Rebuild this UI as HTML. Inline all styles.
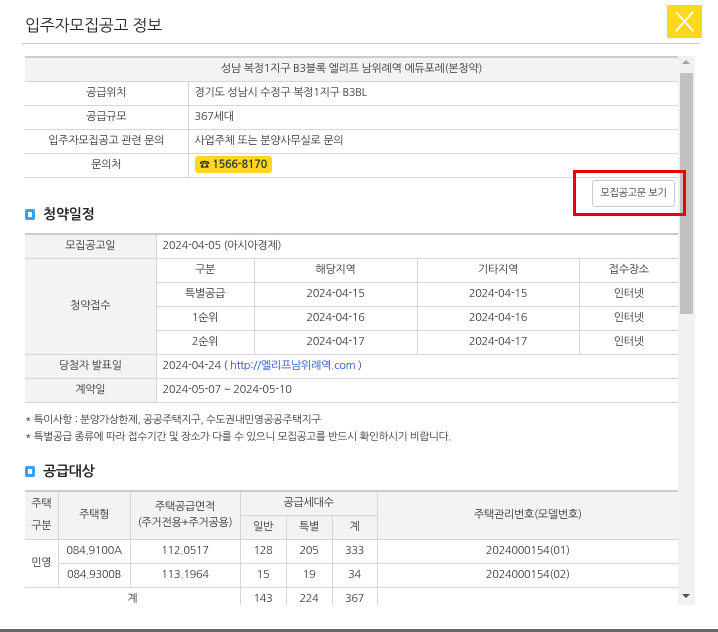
<!DOCTYPE html>
<html><head><meta charset="utf-8"><style>
*{margin:0;padding:0;box-sizing:border-box}
html,body{width:718px;height:632px;overflow:hidden}
body{background:#fff;position:relative;font-family:"NanumGothic","Noto Sans CJK KR",sans-serif;color:#333;font-size:11px;letter-spacing:-0.3px}
.abs{position:absolute}
.clip{position:absolute;left:0;top:56px;width:678px;height:549px;overflow:hidden}
table{border-collapse:collapse;position:absolute;left:25px;width:653px;table-layout:fixed;border-top:2px solid #ccc}
td{border:1px solid #d6d6d6;height:24px;text-align:center;padding:0;font-size:11px;color:#333;white-space:nowrap;overflow:visible}
td.l{text-align:left;padding-left:6px}
.g{background:#f3f3f3}
tr td:first-child{border-left:none}
tr td:last-child{border-right:none}
.sec{position:absolute;left:25px;font-size:14px;font-weight:bold;color:#222}
.sec i{display:inline-block;width:10px;height:11px;border:3px solid #3aa0f0;border-radius:2px;margin-right:8px;vertical-align:-1px}
</style></head><body>
<div class="abs" style="left:25px;top:16px;font-size:16px;color:#222">입주자모집공고 정보</div>
<div class="abs" style="left:22px;top:43px;width:678px;height:1px;background:#ccc"></div>
<div class="abs" style="left:667px;top:5px;width:35px;height:33px;background:#ffd71f">
<svg width="35" height="33"><path d="M9 7L26 26M26 7L9 26" stroke="#fff" stroke-width="2"/></svg></div>

<div class="clip">
<table style="top:0px">
<colgroup><col style="width:163px"><col></colgroup>
<tr><td colspan="2" class="g">성남 복정1지구 B3블록 엘리프 남위례역 에듀포레(본청약)</td></tr>
<tr><td>공급위치</td><td class="l">경기도 성남시 수정구 복정1지구 B3BL</td></tr>
<tr><td>공급규모</td><td class="l">367세대</td></tr>
<tr><td>입주자모집공고 관련 문의</td><td class="l">사업주체 또는 분양사무실로 문의</td></tr>
<tr><td>문의처</td><td class="l"><span style="background:#ffd71f;border-radius:3px;padding:3px 5px;font-weight:bold;color:#333">☎ 1566-8170</span></td></tr>
</table>

<div class="sec" style="top:152px"><i></i>청약일정</div>
<table style="top:177px">
<colgroup><col style="width:131px"><col style="width:98px"><col style="width:163px"><col style="width:162px"><col></colgroup>
<tr><td class="g">모집공고일</td><td colspan="4" class="l">2024-04-05 (아시아경제)</td></tr>
<tr><td class="g" rowspan="4">청약접수</td><td>구분</td><td>해당지역</td><td>기타지역</td><td>접수장소</td></tr>
<tr><td>특별공급</td><td>2024-04-15</td><td>2024-04-15</td><td>인터넷</td></tr>
<tr><td>1순위</td><td>2024-04-16</td><td>2024-04-16</td><td>인터넷</td></tr>
<tr><td>2순위</td><td>2024-04-17</td><td>2024-04-17</td><td>인터넷</td></tr>
<tr><td class="g">당첨자 발표일</td><td colspan="4" class="l">2024-04-24 ( <span style="color:#1a4fc0">http://엘리프남위례역.com</span> )</td></tr>
<tr><td class="g">계약일</td><td colspan="4" class="l">2024-05-07 ~ 2024-05-10</td></tr>
</table>
<div class="abs" style="left:25px;top:355px;font-size:10.5px;line-height:17px;white-space:nowrap">* 특이사항 : 분양가상한제, 공공주택지구, 수도권내민영공공주택지구<br>* 특별공급 종류에 따라 접수기간 및 장소가 다를 수 있으니 모집공고를 반드시 확인하시기 비랍니다.</div>

<div class="sec" style="top:409px"><i></i>공급대상</div>
<table style="top:434px">
<colgroup><col style="width:33px"><col style="width:72px"><col style="width:110px"><col style="width:46px"><col style="width:46px"><col style="width:45px"><col></colgroup>
<tr><td rowspan="2" class="g" style="line-height:22px;height:48px">주택<br>구분</td><td rowspan="2" class="g">주택형</td><td rowspan="2" class="g" style="line-height:16px">주택공급면적<br>(주거전용+주거공용)</td><td colspan="3" class="g">공급세대수</td><td rowspan="2" class="g">주택관리번호(모델번호)</td></tr>
<tr><td class="g">일반</td><td class="g">특별</td><td class="g">계</td></tr>
<tr><td rowspan="2">민영</td><td>084.9100A</td><td>112.0517</td><td>128</td><td>205</td><td>333</td><td>2024000154(01)</td></tr>
<tr><td>084.9300B</td><td>113.1964</td><td>15</td><td>19</td><td>34</td><td>2024000154(02)</td></tr>
<tr><td colspan="3">계</td><td>143</td><td>224</td><td>367</td><td></td></tr>
</table>
</div>
<div class="abs" style="left:0;top:629px;width:718px;height:3px;background:#666"></div>

<div class="abs" style="left:678px;top:56px;width:17px;height:549px;background:#f1f1f1"></div>
<div class="abs" style="left:680px;top:73px;width:13px;height:241px;background:#c1c1c1"></div>
<div class="abs" style="left:682px;top:60px;width:0;height:0;border-left:4px solid transparent;border-right:4px solid transparent;border-bottom:4px solid #a3a3a3"></div>
<div class="abs" style="left:682px;top:594px;width:0;height:0;border-left:4px solid transparent;border-right:4px solid transparent;border-top:4px solid #505050"></div>
<div class="abs" style="left:573px;top:170px;width:113px;height:46px;border:3px solid #e00"></div>
<div class="abs" style="left:592px;top:180px;width:83px;height:27px;border:1px solid #ccc;border-radius:3px;background:#fff;text-align:center;line-height:25px;font-size:10px">모집공고문 보기</div>
</body></html>
